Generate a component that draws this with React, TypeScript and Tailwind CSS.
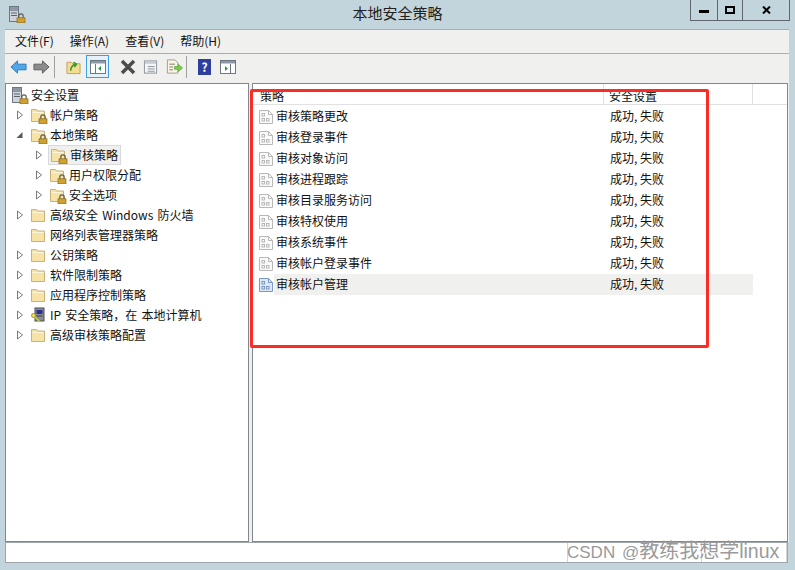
const font = "font-['Noto_Sans_CJK_SC','Liberation_Sans',sans-serif]";

function LockBadge() {
  return (
    <svg viewBox="0 0 10 10" className="absolute right-[-2px] bottom-[-1px] h-[10px] w-[10px]">
      <path d="M2.800 5V3a2.200 2.200 0 0 1 4.400 0V5" fill="none" stroke="#5f5f52" strokeWidth="1.200" />
      <rect x="1" y="4.800" width="8" height="5" fill="#d0a030" stroke="#8a6a1c" strokeWidth="0.700" />
    </svg>
  );
}

function Folder({ lock }: { lock?: boolean }) {
  return (
    <span className="relative block h-[16px] w-[16px] shrink-0">
      <svg viewBox="0 0 16 16" className="h-[16px] w-[16px]">
        <path d="M1.500 2.500h5l1 1.500h7v10.500h-13z" fill="#f7e3a6" stroke="#c9b27a" />
        <path d="M2.500 5.500h11" stroke="#fdf6dc" />
      </svg>
      {lock && <LockBadge />}
    </span>
  );
}

function Arrow({ open }: { open?: boolean }) {
  return (
    <svg viewBox="0 0 8 10" className="h-[10px] w-[8px] shrink-0">
      {open ? <path d="M6.500 2v6h-6z" fill="#595959" /> : <path d="M1.500 1l5 4-5 4z" fill="#fff" stroke="#7a7a7a" />}
    </svg>
  );
}

function ServerLock() {
  return (
    <span className="relative block h-[16px] w-[16px] shrink-0">
      <svg viewBox="0 0 16 16" className="h-[16px] w-[16px]">
        <rect x="1.500" y="0.500" width="9" height="15" fill="#cfd4da" stroke="#6d7681" />
        <rect x="2" y="1" width="8" height="4" fill="#8e98a5" />
        <path d="M3 7h6M3 9.500h6" stroke="#59626d" />
      </svg>
      <LockBadge />
    </span>
  );
}

function ComputerKey() {
  return (
    <svg viewBox="0 0 16 16" className="h-[16px] w-[16px] shrink-0">
      <rect x="5" y="1" width="9" height="13" fill="#8b8f94" stroke="#4b4f55" />
      <rect x="6.500" y="3" width="6" height="4" fill="#2c2f8f" />
      <path d="M6.500 9h6" stroke="#3b3e44" />
      <circle cx="3.500" cy="8.500" r="2" fill="#f5e35c" stroke="#a6951f" />
      <path d="M5 10l5 5" stroke="#d9c72f" strokeWidth="1.600" />
    </svg>
  );
}

function PolicyIcon({ active }: { active?: boolean }) {
  const stroke = active ? "#7c9ac0" : "#b8b8b8";
  const fill = active ? "#dce8f5" : "#fafafa";
  return (
    <svg viewBox="0 0 14 14" className="h-[14px] w-[14px] shrink-0">
      <path d="M0.500 0.500h9l4 4v9h-13z" fill={fill} stroke={stroke} />
      <path d="M9.500 0.500v4h4" fill="none" stroke={stroke} />
      <rect x="3" y="3.500" width="2.500" height="2.500" fill="none" stroke={stroke} />
      <rect x="3" y="8.500" width="2.500" height="2.500" fill="none" stroke={stroke} />
      <rect x="7.500" y="8.500" width="2.500" height="2.500" fill="none" stroke={stroke} />
    </svg>
  );
}

type TreeItem = {
  label: string;
  depth: number;
  arrow?: boolean;
  open?: boolean;
  lock?: boolean;
  selected?: boolean;
  icon?: "server" | "computer";
};

const tree: TreeItem[] = [
  { label: "安全设置", depth: -1, icon: "server" },
  { label: "帐户策略", depth: 0, arrow: true, lock: true },
  { label: "本地策略", depth: 0, arrow: true, open: true, lock: true },
  { label: "审核策略", depth: 1, arrow: true, lock: true, selected: true },
  { label: "用户权限分配", depth: 1, arrow: true, lock: true },
  { label: "安全选项", depth: 1, arrow: true, lock: true },
  { label: "高级安全 Windows 防火墙", depth: 0, arrow: true },
  { label: "网络列表管理器策略", depth: 0 },
  { label: "公钥策略", depth: 0, arrow: true },
  { label: "软件限制策略", depth: 0, arrow: true },
  { label: "应用程序控制策略", depth: 0, arrow: true },
  { label: "IP 安全策略，在 本地计算机", depth: 0, arrow: true, icon: "computer" },
  { label: "高级审核策略配置", depth: 0, arrow: true },
];

const policies = [
  "审核策略更改",
  "审核登录事件",
  "审核对象访问",
  "审核进程跟踪",
  "审核目录服务访问",
  "审核特权使用",
  "审核系统事件",
  "审核帐户登录事件",
  "审核帐户管理",
];

function TreeRow({ item }: { item: TreeItem }) {
  const pad = item.depth === -1 ? "pl-[5px]" : item.depth === 0 ? "pl-[10px]" : "pl-[29px]";
  return (
    <div className={`flex h-[20px] items-center ${pad}`}>
      {item.depth >= 0 && (
        <span className="mr-[6px] flex w-[8px] justify-center">{item.arrow && <Arrow open={item.open} />}</span>
      )}
      <div className={`flex h-[20px] items-center ${item.selected ? "-ml-[1px] border border-[#d9d9d9] bg-[#f0f0ee] pl-[1px]" : ""}`}>
        {item.icon === "server" ? <ServerLock /> : item.icon === "computer" ? <ComputerKey /> : <Folder lock={item.lock} />}
        <span className="ml-[4px] pr-[2px] whitespace-pre [word-spacing:1.5px]">{item.label}</span>
      </div>
    </div>
  );
}

function BackArrow({ color, edge, flip }: { color: string; edge: string; flip?: boolean }) {
  return (
    <svg viewBox="0 0 18 16" className={`h-[16px] w-[17px] ${flip ? "-scale-x-100" : ""}`}>
      <path d="M1 8l7-6.500V5h9v6H8v3.500z" fill={color} stroke={edge} />
    </svg>
  );
}

function Toolbar() {
  return (
    <div className="flex h-[29px] items-center bg-[#f0f0ee] pb-[4px] pl-[5px]">
      <BackArrow color="#52a7e8" edge="#2b78b8" />
      <span className="ml-[6px]"><BackArrow color="#8c8c8c" edge="#5c5c5c" flip /></span>
      <span className="ml-[4px] h-[22px] w-px bg-[#a0a0a0]" />
      <svg viewBox="0 0 16 16" className="ml-[11px] h-[16px] w-[15px]">
        <path d="M1 3h5l1 1.500h8V15H1z" fill="#f4dc93" stroke="#c0a25a" />
        <path d="M5 12c0-4 2-6 5-7M8 3l3 2-2 3" fill="none" stroke="#3f9a2c" strokeWidth="1.800" />
      </svg>
      <span className="ml-[5px] flex h-[23px] w-[23px] items-center justify-center border border-[#3e9ee0] bg-[#e3f1fb]">
        <svg viewBox="0 0 16 14" className="h-[14px] w-[16px]">
          <rect x="0.500" y="0.500" width="15" height="13" fill="#fff" stroke="#6e7783" />
          <rect x="1" y="1" width="14" height="2.500" fill="#8e98a5" />
          <path d="M5.500 4v9" stroke="#6e7783" />
          <path d="M11 6v5l-3-2.500z" fill="#2f9a4c" />
        </svg>
      </span>
      <svg viewBox="0 0 16 16" className="ml-[11px] h-[16px] w-[16px]">
        <path d="M2 2l12 12M14 2L2 14" stroke="#4c4c4c" strokeWidth="3.500" />
      </svg>
      <svg viewBox="0 0 16 16" className="ml-[7px] h-[16px] w-[15px]">
        <rect x="1.500" y="1.500" width="13" height="13" fill="#f4f6f8" stroke="#8a929c" />
        <rect x="2" y="2" width="12" height="2.500" fill="#c4cad1" />
        <path d="M5 7.500h7.500M5 10h7.500M5 12.500h7.500" stroke="#8a929c" />
      </svg>
      <svg viewBox="0 0 18 16" className="ml-[8px] h-[16px] w-[17px]">
        <path d="M1.500 0.500h8l3 3v11h-11z" fill="#f8f5e6" stroke="#a09c8a" />
        <path d="M3.500 5h6M3.500 8h4M3.500 11h4" stroke="#7d7a6c" />
        <path d="M9 7.500h4V5l4.500 4-4.500 4v-2.500H9z" fill="#7ccb4f" stroke="#4b9a2c" strokeWidth="0.600" />
      </svg>
      <span className="ml-[3px] h-[22px] w-px bg-[#a0a0a0]" />
      <span className="ml-[11px] flex h-[16px] w-[13px] items-center justify-center bg-[#2f3f9f] text-[12px] leading-none font-bold text-white">?</span>
      <svg viewBox="0 0 16 14" className="ml-[9px] h-[14px] w-[16px]">
        <rect x="0.500" y="0.500" width="15" height="13" fill="#fff" stroke="#6e7783" />
        <rect x="1" y="1" width="14" height="2.500" fill="#8e98a5" />
        <path d="M10.500 4v9" stroke="#6e7783" />
        <path d="M5 6v5l3-2.500z" fill="#2f9a4c" />
      </svg>
    </div>
  );
}

export default function App() {
  return (
    <div className={`relative flex h-[570px] w-[795px] flex-col overflow-hidden bg-[#c3d5dc] text-[12px] text-[#111] ${font}`}>
      <div className="grid h-[29px] shrink-0 grid-cols-[1fr_auto_1fr]">
        <div className="pl-[8px] pt-[6px]"><ServerLock /></div>
        <div className="pt-[3px] text-[15px] leading-[20px] text-[#222]">本地安全策略</div>
        <div className="flex justify-end pr-[5px]">
          <div className="flex h-[21px] border-x border-b border-[#5f666c]">
            <div className="flex w-[27px] items-center justify-center border-r border-[#5f666c]">
              <span className="mt-[3px] h-[3px] w-[10px] bg-black" />
            </div>
            <div className="flex w-[25px] items-center justify-center border-r border-[#5f666c]">
              <span className="h-[8px] w-[10px] border-2 border-black" />
            </div>
            <div className="flex w-[46px] items-center justify-center">
              <svg viewBox="0 0 9 8" className="h-[8px] w-[9px]">
                <path d="M1 0.500l7 7M8 0.500l-7 7" stroke="#000" strokeWidth="2" />
              </svg>
            </div>
          </div>
        </div>
      </div>

      <div className="mx-[5px] mb-[7px] flex min-h-0 w-[784px] flex-1 flex-col border-t border-[#a9adb3]">
        <div className="flex h-[24px] shrink-0 items-center gap-[16px] border-b border-[#a9adb3] bg-[#f0f0ee] pb-[2px] pl-[10px]">
          <span>文件(F)</span>
          <span>操作(A)</span>
          <span>查看(V)</span>
          <span>帮助(H)</span>
        </div>
        <Toolbar />

        <div className="flex min-h-0 flex-1 gap-[3px] bg-[#f0f0ee]">
          <div className="w-[244px] shrink-0 border border-[#828790] bg-white pt-[1px]">
            {tree.map((item) => (
              <TreeRow key={item.label} item={item} />
            ))}
          </div>
          <div className="mr-[1px] min-w-0 flex-1 border border-[#828790] bg-white">
            <div className="flex h-[21px] border-b border-[#e1e1e1]">
              <div className="relative flex w-[351px] items-center border-r border-[#e1e1e1] pt-[3px] pl-[7px]">
                策略
                <span className="absolute top-[7px] left-[174px] h-px w-[7px] bg-[#333]" />
              </div>
              <div className="flex w-[149px] items-center border-r border-[#e1e1e1] pt-[3px] pl-[5px]">安全设置</div>
            </div>
            <div className="pt-[1px]">
              {policies.map((name, i) => {
                const active = i === policies.length - 1;
                return (
                  <div key={name} className="flex h-[21px] w-[500px] items-center pl-[6px]">
                    <PolicyIcon active={active} />
                    <div className={`ml-[1px] flex h-[21px] flex-1 items-center pb-[2px] ${active ? "bg-[#f0f0ee]" : ""}`}>
                      <span className="w-[336px] pl-[2px]">{name}</span>
                      <span>成功, 失败</span>
                    </div>
                  </div>
                );
              })}
            </div>
          </div>
        </div>

        <div className="mr-[1px] flex h-[21px] shrink-0 border border-[#a0a5aa] bg-white">
          <div className="w-[562px] border-r border-[#d5d5d5]" />
          <div className="w-[134px] border-r border-[#d5d5d5]" />
          <div className="w-[85px] border-r border-[#d5d5d5]" />
        </div>
      </div>

      {/* red annotation box drawn over the screenshot */}
      <div className="absolute top-[89px] left-[250px] h-[259px] w-[459px] rounded-[2px] border-[3px] border-[#fb2b26]" />
      <div className="absolute top-[539px] left-[567px] font-['Liberation_Sans','Noto_Sans_CJK_SC',sans-serif] text-[17px] leading-[24px] whitespace-pre text-[#9a9a9a] [word-spacing:2px]">
        CSDN @<span className="text-[20px]">教练我想学</span><span className="text-[19.5px]">linux</span>
      </div>
    </div>
  );
}
